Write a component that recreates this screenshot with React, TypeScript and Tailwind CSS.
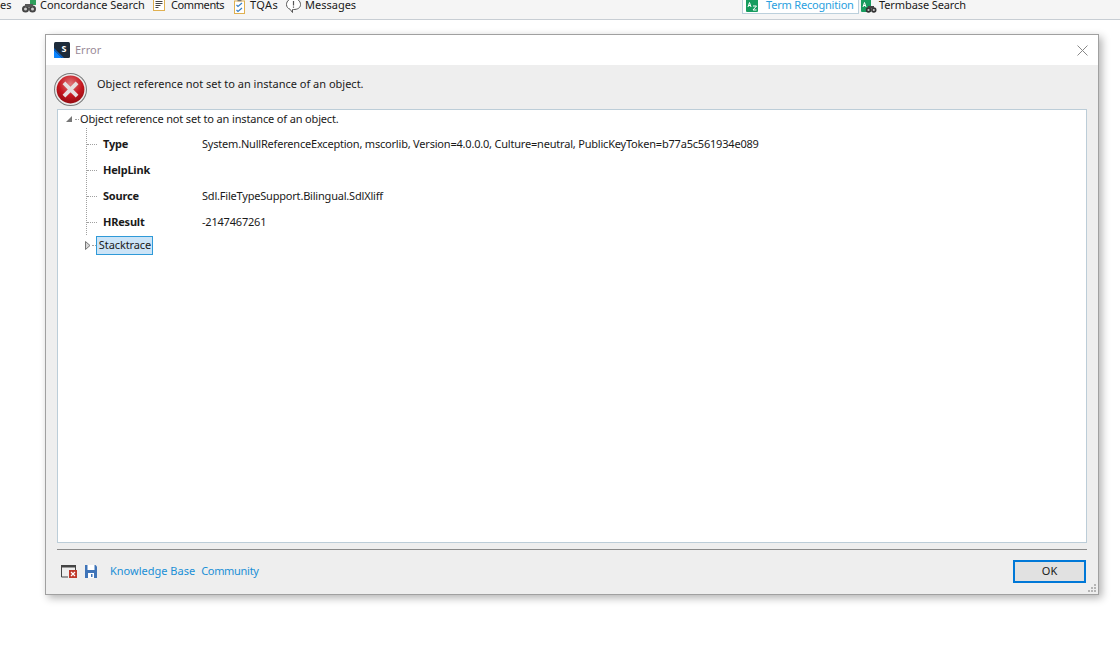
import type { ReactNode } from "react";

const font = "font-['Noto_Sans','Open_Sans',sans-serif]";

function GlassesIcon() {
  return (
    <svg width="16" height="13" viewBox="0 0 16 13" className="shrink-0">
      <rect x="9" y="0" width="6" height="5" fill="#2e9e5b" />
      <circle cx="4.5" cy="9" r="3.5" fill="#444" />
      <circle cx="11.5" cy="9" r="3.5" fill="#444" />
      <circle cx="4.5" cy="9" r="1.5" fill="#ccc" />
      <circle cx="11.5" cy="9" r="1.5" fill="#ccc" />
      <rect x="4" y="4" width="8" height="3" fill="#555" />
    </svg>
  );
}

function CommentsIcon() {
  return (
    <svg width="12" height="12" viewBox="0 0 12 12" className="shrink-0">
      <rect x="0.5" y="-1" width="11" height="11.5" fill="#fff" stroke="#e0b050" />
      <path d="M2.5 1.5h7M2.5 3.5h7M2.5 5.5h5M2.5 7.5h3" stroke="#444" strokeWidth="1" />
    </svg>
  );
}

function TqaIcon() {
  return (
    <svg width="11" height="14" viewBox="0 0 11 14" className="shrink-0">
      <rect x="0.5" y="1" width="10" height="12.5" fill="#fff" stroke="#e0b050" />
      <path d="M3.5 0.5h4" stroke="#777" strokeWidth="1.5" />
      <path d="M2.5 5l1.5 1.5L8 3M2.5 10l1.5 1.5L8 8" stroke="#3a7fc4" strokeWidth="1.2" fill="none" />
    </svg>
  );
}

function MessageIcon() {
  return (
    <svg width="15" height="14" viewBox="0 0 15 14" className="shrink-0">
      <path d="M7.5 -1.5C3.5 -1.5 0.5 1 0.5 4.5c0 2.5 1.5 4 3.5 4.7L6.5 12.5V9.5h1C11.5 9.5 14.5 8 14.5 4.5S11.5 -1.5 7.5 -1.5Z" fill="#fff" stroke="#555" />
      <path d="M7.5 1v4.5M7.5 6.5v1.2" stroke="#555" strokeWidth="1.2" />
    </svg>
  );
}

function TermIcon({ binoculars }: { binoculars?: boolean }) {
  return (
    <svg width="16" height="13" viewBox="0 0 16 13" className="shrink-0">
      <rect x="0" y="-1" width={binoculars ? 10 : 12} height="13" rx="1" fill="#179c5f" />
      <path d="M2 7l1.5-4.5L5 7M2.6 5.5h1.8" stroke="#fff" strokeWidth="1" fill="none" />
      {!binoculars && <path d="M7 6h3.5L7 10h3.5" stroke="#fff" strokeWidth="1" fill="none" />}
      {binoculars && (
        <g>
          <circle cx="7.5" cy="10" r="2.7" fill="#333" />
          <circle cx="12.8" cy="10" r="2.7" fill="#333" />
          <circle cx="7.5" cy="10" r="1.1" fill="#ccc" />
          <circle cx="12.8" cy="10" r="1.1" fill="#ccc" />
          <rect x="7" y="6" width="6" height="2.5" fill="#444" />
        </g>
      )}
    </svg>
  );
}

function AppLogo() {
  return (
    <svg width="16" height="16" viewBox="0 0 16 16" className="shrink-0">
      <rect width="16" height="16" rx="1.5" fill="#1d2b3a" />
      <path d="M0 8L8 16H1.5A1.5 1.5 0 0 1 0 14.5Z" fill="#0a84ff" />
      <path d="M0 6L10 16H8L0 8Z" fill="#0a5fc0" />
      <text x="10" y="9.5" textAnchor="middle" fontSize="9" fontWeight="700" fill="#fff" fontFamily="Noto Sans">S</text>
    </svg>
  );
}

function ErrorIcon() {
  return (
    <svg width="33" height="33" viewBox="0 0 32 32" className="shrink-0">
      <defs>
        <radialGradient id="errFill" cx="50%" cy="30%" r="75%">
          <stop offset="0%" stopColor="#e0787c" />
          <stop offset="55%" stopColor="#c5161e" />
          <stop offset="100%" stopColor="#8e0a10" />
        </radialGradient>
      </defs>
      <circle cx="16" cy="16" r="15.5" fill="#ececec" stroke="#7a7a7a" />
      <circle cx="16" cy="16" r="13.5" fill="url(#errFill)" />
      <path d="M11 11L21 21M21 11L11 21" stroke="#e6e0e0" strokeWidth="3.8" strokeLinecap="square" />
    </svg>
  );
}

function ToolItem({ icon, label, gap, left, width }: { icon: ReactNode; label: string; gap: string; left: string; width: string }) {
  return (
    <div className={`flex items-start ${gap} ${left}`}>
      {icon}
      <span className={`-mt-[1px] whitespace-nowrap ${width}`}>{label}</span>
    </div>
  );
}

function DetailRow({ name, value }: { name: string; value?: string }) {
  return (
    <div className="flex h-[26px] items-center">
      <div className="w-[10px] border-t border-dotted border-[#a0a0a0]" />
      <span className="ml-1.5 w-[99px] font-bold tracking-[-0.2px]">{name}</span>
      <span className="tracking-[-0.2px]">{value}</span>
    </div>
  );
}

export default function App() {
  return (
    <div className={`h-[662px] w-[1120px] overflow-hidden bg-white text-[11px] text-[#1a1a1a] ${font}`}>
      <div className="flex h-5 items-start overflow-hidden border-b border-[#c8ced4] bg-[#f5f5f5] leading-[11px]">
        <span className="-mt-[1px] w-[13px] whitespace-nowrap">es</span>
        <ToolItem icon={<GlassesIcon />} label="Concordance Search" gap="gap-[3px]" left="ml-2" width="w-[104px] tracking-[-0.05px]" />
        <ToolItem icon={<CommentsIcon />} label="Comments" gap="gap-1.5" left="ml-[9px]" width="w-[53px] tracking-[-0.4px]" />
        <ToolItem icon={<TqaIcon />} label="TQAs" gap="gap-[5px]" left="ml-2.5" width="w-[29px] tracking-[0.4px]" />
        <ToolItem icon={<MessageIcon />} label="Messages" gap="gap-1" left="ml-[7px]" width="w-[51px]" />
        <div className="ml-[386px] flex h-[14px] w-[117px] items-start gap-1 border border-t-0 border-[#bcd0dc] bg-white pl-[3px] text-[#2a9fe0]">
          <TermIcon />
          <span className="-mt-[1px] whitespace-nowrap tracking-[-0.2px]">Term Recognition</span>
        </div>
        <ToolItem icon={<TermIcon binoculars />} label="Termbase Search" gap="gap-[3px]" left="ml-0.5" width="w-[88px] -ml-px tracking-[-0.1px]" />
      </div>

      <div className="ml-[45px] mt-3.5 flex h-[561px] w-[1054px] flex-col border border-[#a0a0a0] bg-[#eeeeee] shadow-[3px_3px_8px_rgba(0,0,0,0.3)]">
        <div className="flex h-[30px] shrink-0 items-center bg-white pl-2 pr-[10px]">
          <AppLogo />
          <span className="ml-[5px] text-[#9a8a98]">Error</span>
          <svg width="11" height="11" viewBox="0 0 11 11" className="ml-auto">
            <path d="M0.5 0.5L10.5 10.5M10.5 0.5L0.5 10.5" stroke="#888" />
          </svg>
        </div>

        <div className="flex h-[44px] shrink-0 items-start pl-2 pt-2">
          <ErrorIcon />
          <span className="ml-[10px] mt-[3px]">Object reference not set to an instance of an object.</span>
        </div>

        <div className="mx-[11px] flex h-[434px] shrink-0 flex-col border border-[#bccdd8] bg-white">
          <div className="flex h-[18px] items-center pl-[7px]">
            <svg width="8" height="8" viewBox="0 0 8 8" className="shrink-0">
              <path d="M7 1V7H1Z" fill="#777" />
            </svg>
            <div className="ml-0.5 w-1 border-t border-dotted border-[#a0a0a0]" />
            <span className="ml-px tracking-[-0.15px]">Object reference not set to an instance of an object.</span>
          </div>
          <div className="ml-7 border-l border-dotted border-[#a0a0a0] pt-[3px]">
            <DetailRow name="Type" value="System.NullReferenceException, mscorlib, Version=4.0.0.0, Culture=neutral, PublicKeyToken=b77a5c561934e089" />
            <DetailRow name="HelpLink" />
            <DetailRow name="Source" value="Sdl.FileTypeSupport.Bilingual.SdlXliff" />
            <DetailRow name="HResult" value="-2147467261" />
          </div>
          <div className="flex h-5 items-center pl-[27px] pt-px">
            <svg width="6" height="9" viewBox="0 0 6 9" className="shrink-0">
              <path d="M0.5 0.5L5 4.5L0.5 8.5Z" fill="#d8d8d8" stroke="#777" />
            </svg>
            <div className="ml-px w-1 border-t border-dotted border-[#a0a0a0]" />
            <span className="flex h-[19px] w-[57px] items-center justify-center border border-[#2f9ad8] bg-[#cce4f7] pl-px tracking-[-0.1px]">Stacktrace</span>
          </div>
        </div>

        <div className="mx-[11px] mt-1.5 h-px shrink-0 bg-[#8a8a8a]" />

        <div className="relative flex flex-1 items-center pb-0.5 pl-[15px] pr-3">
          <svg width="16" height="14" viewBox="0 0 16 14" className="shrink-0">
            <path d="M0.5 13V1.5H14.5V6" fill="none" stroke="#444" />
            <rect x="0" y="1" width="15" height="2.5" fill="#444" />
            <path d="M0.5 13H7" stroke="#444" />
            <rect x="8" y="6" width="8" height="8" fill="#c0392b" />
            <path d="M10 8l4 4M14 8l-4 4" stroke="#fff" strokeWidth="1.2" />
          </svg>
          <svg width="12" height="13" viewBox="0 0 12 13" className="ml-2 shrink-0">
            <path d="M0 0H10.5L12 1.5V13H0Z" fill="#3f74b8" />
            <rect x="2.5" y="0" width="7" height="5" fill="#fff" />
            <rect x="3" y="8" width="6" height="5" fill="#fff" />
            <rect x="6" y="9" width="1.5" height="3" fill="#3f74b8" />
          </svg>
          <a className="ml-[13px] text-[#1a8fd6]">Knowledge Base</a>
          <a className="ml-1.5 tracking-[-0.3px] text-[#1a8fd6]">Community</a>
          <button className="ml-auto h-[23px] w-[73px] border-2 border-[#0078d7] bg-[#e1e1e1]">OK</button>
          <svg width="10" height="10" viewBox="0 0 10 10" className="absolute bottom-px right-[1px]">
            <path d="M7 1h2v2H7zM4 4h2v2H4zM7 4h2v2H7zM1 7h2v2H1zM4 7h2v2H4zM7 7h2v2H7z" fill="#b5b5b5" />
          </svg>
        </div>
      </div>
    </div>
  );
}
